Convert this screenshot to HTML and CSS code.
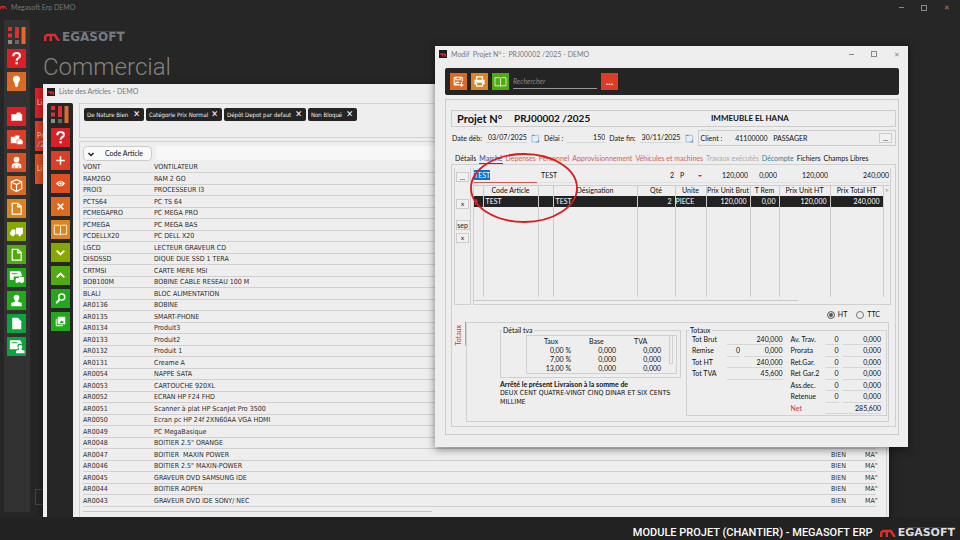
FILE: index.html
```html
<!DOCTYPE html>
<html lang="fr">
<head>
    <meta charset="UTF-8">
    <meta name="viewport" content="width=device-width, initial-scale=1.0">
    <title>Megasoft Erp DEMO</title>
    <link rel="stylesheet" href="styles.css">
</head>
<body>
    <!-- Shared icons -->
    <svg class="icon-defs" aria-hidden="true">
        <symbol id="bars" viewBox="0 0 20 20">
            <path fill="#d8322f" d="M1 1h4v4H1zM1 7.500h4v4H1zM8 1h4v11H8z"/>
            <path fill="#e06a2c" d="M14.500 1h4v17h-4z"/>
            <path fill="#8a8a8a" d="M1 14h4v4H1z"/>
            <path fill="#666" d="M8 14h4v4H8z"/>
        </symbol>
        <symbol id="help" viewBox="0 0 20 20">
            <path d="M6.600 7.500q0-3.300 3.500-3.300t3.500 2.800q0 1.600-1.800 2.700-1.700 1-1.700 2.600" fill="none" stroke="#fff" stroke-width="2.200"/>
            <path fill="#fff" d="M8.900 13.800h2.400v2.300H8.900z"/>
        </symbol>
        <symbol id="bulb" viewBox="0 0 20 20"><path fill="#fff" d="M10 4a3.700 3.700 0 0 1 3.700 3.700c0 2-1.700 3-2 4.800v2.300L10 16l-1.700-1.200v-2.300c-.3-1.800-2-2.800-2-4.800A3.700 3.700 0 0 1 10 4z"/></symbol>
        <symbol id="folder" viewBox="0 0 20 20"><path fill="#fff" d="M4.500 7.500h5l1-1.700h3.500l1 1.700h1v7H4.500z"/></symbol>
        <symbol id="folder-file" viewBox="0 0 20 20"><path fill="#fff" d="M4 7h4l.8-1.200H13V9.500h1.500l2 2v3.500H10v-1H4z"/><path d="M10.500 15v-4.500h3" stroke="#dc3d27" stroke-width=".6" fill="none"/></symbol>
        <symbol id="user" viewBox="0 0 20 20"><circle cx="10" cy="7" r="3" fill="#fff"/><path fill="#fff" d="M5 16v-2.500q0-3 5-3t5 3V16z"/><path d="M7.500 13v3M12.500 13v3" stroke="#dd5022" stroke-width=".8"/></symbol>
        <symbol id="box" viewBox="0 0 20 20"><path fill="none" stroke="#fff" stroke-width="1.200" d="M10 3.800l5.500 2.500v7L10 16.300l-5.500-3v-7zM4.500 6.300L10 9l5.500-2.700M10 9v7.300"/></symbol>
        <symbol id="page" viewBox="0 0 20 20"><path fill="none" stroke="#fff" stroke-width="1.300" d="M5.500 4.500h6l3.500 3.500v8H5.500zM11.300 4.500v3.800H15"/></symbol>
        <symbol id="page-full" viewBox="0 0 20 20"><path fill="#fff" d="M5.500 4h6l3.500 3.700V16H5.500z"/></symbol>
        <symbol id="truck" viewBox="0 0 20 20"><path fill="#fff" d="M9.500 6h7.200v7H9.500zM8.800 8v5.500H3.300V11l2-3z"/><circle cx="6" cy="13.500" r="1.600" fill="#fff"/><circle cx="13.500" cy="13.500" r="1.600" fill="#fff"/></symbol>
        <symbol id="card-truck" viewBox="0 0 20 20"><path fill="#fff" d="M3 3.500h11l1.500 3V9H7v3.500H3zM9.500 10.500h3v-1h5.500v5.500h-1l-1.500 1-1.500-1h-2l-1.500 1-1.500-1v-2z"/><path d="M5 6h6" stroke="#24a812" stroke-width="1"/></symbol>
        <symbol id="stamp" viewBox="0 0 20 20"><path fill="#fff" d="M10 4a3 3 0 0 1 3 3c0 1.800-1.500 2.500-1.500 4l4 1.500V16h-11v-3.500l4-1.500c0-1.500-1.500-2.200-1.500-4a3 3 0 0 1 3-3z"/></symbol>
        <symbol id="card-stamp" viewBox="0 0 20 20"><path fill="#fff" d="M3 3.500h11l1.500 3V8a2.500 2.500 0 0 0-4 3.500V13H3zM14 8.500a2 2 0 0 1 1.200 3.700l.3 1.300 3 1V17H9.500v-2.500l3-1 .3-1.300A2 2 0 0 1 14 8.500z"/><path d="M5 6h6" stroke="#0e9c38" stroke-width="1"/></symbol>
        <symbol id="plus" viewBox="0 0 20 20"><path d="M10 5.500v9M5.500 10h9" stroke="#fff" stroke-width="1.600"/></symbol>
        <symbol id="eye" viewBox="0 0 20 20"><path fill="#fff" d="M5 10q5-6 10 0-5 6-10 0z"/><circle cx="10" cy="10" r="1.700" fill="#fff" stroke="#dd5022" stroke-width="1"/></symbol>
        <symbol id="cross" viewBox="0 0 20 20"><path d="M7 7l6 6M13 7l-6 6" stroke="#fff" stroke-width="1.800"/></symbol>
        <symbol id="book" viewBox="0 0 20 20"><path fill="none" stroke="#fff" stroke-width="1" stroke-opacity=".9" d="M3.500 5.500H9l1 .8 1-.8h5.500V15H11l-1 .7-1-.7H3.500zM10 6v9.500"/></symbol>
        <symbol id="down" viewBox="0 0 20 20"><path fill="none" stroke="#fff" stroke-width="2" d="M6 8l4 4 4-4"/></symbol>
        <symbol id="up" viewBox="0 0 20 20"><path fill="none" stroke="#fff" stroke-width="2" d="M6 12l4-4 4 4"/></symbol>
        <symbol id="search" viewBox="0 0 20 20"><circle cx="11.300" cy="8.500" r="3.200" fill="none" stroke="#fff" stroke-width="1.500"/><path d="M9 11l-3.500 4" stroke="#fff" stroke-width="2"/></symbol>
        <symbol id="copies" viewBox="0 0 20 20"><path fill="none" stroke="#fff" d="M5.500 7.500v7h7"/><path fill="#fff" d="M7 5h8v8H7z"/><path fill="#22a818" d="M9 11.500l2-2.500 1 1 1-1v2.500z"/></symbol>
        <symbol id="save" viewBox="0 0 20 20"><path fill="none" stroke="#fff" stroke-width="1.300" d="M5 5h8.500l1 1v4M5 5v9h6M7 5v3h5V5M7 14v-3h4M13.500 10.500v5M11.500 13.500l2 2 2-2"/></symbol>
        <symbol id="print" viewBox="0 0 20 20"><path fill="none" stroke="#fff" stroke-width="1.400" d="M6.500 8V4.500h7V8"/><path fill="#fff" d="M4 8h12v5.500h-2v-2H6v2H4z"/><path fill="none" stroke="#fff" stroke-width="1.400" d="M6.500 12v3.500h7V12"/></symbol>
        <symbol id="brand" viewBox="0 0 20 10"><path fill="none" stroke="#dc2f2b" stroke-width="3" d="M1.500 10V4.500L4 2.500h9.500L18.500 10M8.500 3v7"/></symbol>
        <symbol id="app" viewBox="0 0 10 10"><path fill="#1b1b1b" d="M0 0h10v10H0z"/><path fill="#cc2b2b" d="M1 4h5l3 1v3l-2 1V6.500H5.500V8h-2V6H1z"/></symbol>
        <symbol id="calendar" viewBox="0 0 10 10"><path fill="#e4eef6" stroke="#9fc0d8" d="M1 1.500h7.500v7L6 9H1z"/><path d="M1 1.500h3M8.500 7v2H6" stroke="#4f8fbd" fill="none"/></symbol>
    </svg>

    <header class="app-title">
        <svg class="app-mark"><use href="#brand"/></svg>
        <span>Megasoft Erp DEMO</span>
        <span class="window-controls"><i class="minimize"></i><i class="restore"></i><i class="close">✕</i></span>
    </header>

    <nav class="sidebar main-sidebar" aria-label="Modules">
        <svg class="bars"><use href="#bars"/></svg>
        <button class="red" aria-label="Aide"><svg><use href="#help"/></svg></button>
        <button class="orange" aria-label="Astuces"><svg><use href="#bulb"/></svg></button>
        <button class="red group-start" aria-label="Dossiers"><svg><use href="#folder"/></svg></button>
        <button class="vermilion" aria-label="Documents"><svg><use href="#folder-file"/></svg></button>
        <button class="tomato" aria-label="Clients"><svg><use href="#user"/></svg></button>
        <button class="orange" aria-label="Articles"><svg><use href="#box"/></svg></button>
        <button class="amber" aria-label="Devis"><svg><use href="#page"/></svg></button>
        <button class="olive" aria-label="Livraisons"><svg><use href="#truck"/></svg></button>
        <button class="lime" aria-label="Factures"><svg><use href="#page"/></svg></button>
        <button class="green" aria-label="Achats"><svg><use href="#card-truck"/></svg></button>
        <button class="green" aria-label="Fournisseurs"><svg><use href="#stamp"/></svg></button>
        <button class="emerald" aria-label="Avoirs"><svg><use href="#page-full"/></svg></button>
        <button class="emerald" aria-label="Paiements"><svg><use href="#card-stamp"/></svg></button>
    </nav>

    <main class="home">
        <div class="brand">
            <svg class="brand-mark"><use href="#brand"/></svg>
            <span class="brand-name">EGASOFT</span>
        </div>
        <h1>Commercial</h1>
        <div class="tiles">
            <div class="tile red">Li</div>
            <div class="tile vermilion">Pr<br>/2</div>
            <div class="tile tomato">Li</div>
        </div>
        <button class="exit" aria-label="Quitter"></button>
    </main>

    <!-- Articles window -->
    <section class="window articles">
        <div class="window-title"><svg class="app-icon"><use href="#app"/></svg><span>Liste des Articles - DEMO</span></div>
        <div class="articles-body">
            <nav class="sidebar articles-sidebar" aria-label="Actions">
                <svg class="bars"><use href="#bars"/></svg>
                <button class="red" aria-label="Aide"><svg><use href="#help"/></svg></button>
                <button class="vermilion" aria-label="Ajouter"><svg><use href="#plus"/></svg></button>
                <button class="tomato" aria-label="Voir"><svg><use href="#eye"/></svg></button>
                <button class="orange" aria-label="Supprimer"><svg><use href="#cross"/></svg></button>
                <button class="amber" aria-label="Catalogue"><svg><use href="#book"/></svg></button>
                <button class="olive" aria-label="Suivant"><svg><use href="#down"/></svg></button>
                <button class="lime" aria-label="Précédent"><svg><use href="#up"/></svg></button>
                <button class="green" aria-label="Rechercher"><svg><use href="#search"/></svg></button>
                <button class="green" aria-label="Dupliquer"><svg><use href="#copies"/></svg></button>
            </nav>
            <div class="articles-content">
                <div class="filters">
                    <button class="chip chip-small">De Nature Bien <b>✕</b></button>
                    <button class="chip chip-medium">Catégorie Prix Normal <b>✕</b></button>
                    <button class="chip chip-large">Dépôt Depot par defaut <b>✕</b></button>
                    <button class="chip chip-tiny">Non Bloqué <b>✕</b></button>
                </div>
                <div class="article-list">
                    <div class="search-row">
                        <button class="field-select"><svg viewBox="0 0 8 8"><path d="M1.500 3L4 5.500 6.500 3" fill="none" stroke="#222" stroke-width="1.500"/></svg><span>Code Article</span></button>
                        <input type="text" aria-label="Recherche par code article">
                    </div>
                    <table class="article-table">
                        <colgroup><col class="col-code"><col><col class="col-type"><col class="col-family"></colgroup>
                        <tbody>
                            <tr><td>VONT</td><td>VONTILATEUR</td><td></td><td></td></tr>
                            <tr><td>RAM2GO</td><td>RAM 2 GO</td><td></td><td></td></tr>
                            <tr><td>PROI3</td><td>PROCESSEUR I3</td><td></td><td></td></tr>
                            <tr><td>PCTS64</td><td>PC TS 64</td><td></td><td></td></tr>
                            <tr><td>PCMEGAPRO</td><td>PC MEGA PRO</td><td></td><td></td></tr>
                            <tr><td>PCMEGA</td><td>PC MEGA BAS</td><td></td><td></td></tr>
                            <tr><td>PCDELLX20</td><td>PC DELL X20</td><td></td><td></td></tr>
                            <tr><td>LGCD</td><td>LECTEUR GRAVEUR CD</td><td></td><td></td></tr>
                            <tr><td>DISDSSD</td><td>DIQUE DUE SSD 1 TERA</td><td></td><td></td></tr>
                            <tr><td>CRTMSI</td><td>CARTE MERE MSI</td><td></td><td></td></tr>
                            <tr><td>BOB100M</td><td>BOBINE CABLE RESEAU 100 M</td><td></td><td></td></tr>
                            <tr><td>BLALI</td><td>BLOC ALIMENTATION</td><td></td><td></td></tr>
                            <tr><td>AR0136</td><td>BOBINE</td><td></td><td></td></tr>
                            <tr><td>AR0135</td><td>SMART-PHONE</td><td></td><td></td></tr>
                            <tr><td>AR0134</td><td>Produit3</td><td></td><td></td></tr>
                            <tr><td>AR0133</td><td>Produit2</td><td></td><td></td></tr>
                            <tr><td>AR0132</td><td>Produit 1</td><td></td><td></td></tr>
                            <tr><td>AR0131</td><td>Creame A</td><td></td><td></td></tr>
                            <tr><td>AR0054</td><td>NAPPE SATA</td><td></td><td></td></tr>
                            <tr><td>AR0053</td><td>CARTOUCHE 920XL</td><td></td><td></td></tr>
                            <tr><td>AR0052</td><td>ECRAN HP F24 FHD</td><td></td><td></td></tr>
                            <tr><td>AR0051</td><td>Scanner à plat HP ScanJet Pro 3500</td><td></td><td></td></tr>
                            <tr><td>AR0050</td><td>Ecran pc HP 24f 2XN60AA VGA HDMI</td><td></td><td></td></tr>
                            <tr><td>AR0049</td><td>PC MegaBasique</td><td></td><td></td></tr>
                            <tr><td>AR0048</td><td>BOITIER 2.5" ORANGE</td><td></td><td></td></tr>
                            <tr><td>AR0047</td><td>BOITIER &nbsp;MAXIN POWER</td><td>BIEN</td><td>MA"</td></tr>
                            <tr><td>AR0046</td><td>BOITIER 2.5" MAXIN-POWER</td><td>BIEN</td><td>MA"</td></tr>
                            <tr><td>AR0045</td><td>GRAVEUR DVD SAMSUNG IDE</td><td>BIEN</td><td>MA"</td></tr>
                            <tr><td>AR0044</td><td>BOITIER AOPEN</td><td>BIEN</td><td>MA"</td></tr>
                            <tr><td>AR0043</td><td>GRAVEUR DVD IDE SONY/ NEC</td><td>BIEN</td><td>MA"</td></tr>
                        </tbody>
                    </table>
                    <div class="scroll-track"></div>
                </div>
            </div>
        </div>
    </section>

    <!-- Project window -->
    <section class="window project">
        <div class="window-title">
            <svg class="app-icon"><use href="#app"/></svg><span>Modif &nbsp;Projet N° : &nbsp;PRJ00002 /2025 - DEMO</span>
            <span class="window-controls"><i class="minimize"></i><i class="maximize"></i><i class="close">✕</i></span>
        </div>
        <div class="toolbar">
            <button class="orange" aria-label="Enregistrer"><svg><use href="#save"/></svg></button>
            <button class="amber" aria-label="Imprimer"><svg><use href="#print"/></svg></button>
            <button class="lime" aria-label="Consulter"><svg><use href="#book"/></svg></button>
            <input type="text" placeholder="Rechercher" aria-label="Rechercher">
            <button class="vermilion more">...</button>
        </div>
        <div class="project-body">
            <div class="project-head">
                <span class="project-label">Projet N°</span>
                <span class="project-number">PRJ00002 /2025</span>
                <span class="project-name">IMMEUBLE EL HANA</span>
            </div>
            <div class="project-info">
                <label for="date_deb">Date déb:</label>
                <input type="text" id="date_deb" class="date" value="03/07/2025">
                <svg class="calendar"><use href="#calendar"/></svg>
                <label for="delai">Délai :</label>
                <input type="text" id="delai" class="delay number" value="150">
                <label for="date_fin">Date fin:</label>
                <input type="text" id="date_fin" class="date" value="30/11/2025">
                <svg class="calendar"><use href="#calendar"/></svg>
                <div class="client">
                    <label for="client">Client :</label>
                    <input type="text" id="client" value="41100000">
                    <span>PASSAGER</span>
                    <button class="small-button">...</button>
                </div>
            </div>
            <nav class="tabs">
                <a href="#">Détails</a>
                <a href="#" class="active">Marché</a>
                <a href="#" class="tab-red">Dépenses</a>
                <a href="#" class="tab-red">Personnel</a>
                <a href="#" class="tab-red">Approvisionnement</a>
                <a href="#" class="tab-red">Véhicules et machines</a>
                <a href="#" class="tab-gray">Travaux exécutés</a>
                <a href="#" class="tab-teal">Décompte</a>
                <a href="#">Fichiers</a>
                <a href="#">Champs Libres</a>
            </nav>
            <div class="tab-panel">
                <div class="market">
                    <div class="line-actions">
                        <button class="small-button">...</button>
                        <button class="small-button remove">×</button>
                        <button class="small-button sep">sep</button>
                        <button class="small-button">×</button>
                    </div>
                    <div class="lines">
                        <div class="line-entry">
                            <div class="entry-code"><mark>TEST</mark></div>
                            <input type="text" class="entry-name" aria-label="Désignation" value="TEST">
                            <input type="text" class="entry-qty number" aria-label="Quantité" value="2">
                            <div class="entry-unit"><span>P</span><i></i></div>
                            <input type="text" class="entry-price number" aria-label="Prix brut" value="120,000">
                            <input type="text" class="entry-discount number" aria-label="Remise" value="0,000">
                            <input type="text" class="entry-net number" aria-label="Prix HT" value="120,000">
                            <input type="text" class="entry-total number" aria-label="Total HT" value="240,000">
                        </div>
                        <table class="line-table">
                            <colgroup><col class="w-mark"><col class="w-code"><col class="w-icon"><col class="w-name"><col class="w-qty"><col class="w-unit"><col class="w-price"><col class="w-discount"><col class="w-net"><col class="w-total"><col class="w-scroll"></colgroup>
                            <thead>
                                <tr><th></th><th>Code Article</th><th></th><th>Désignation</th><th>Qté</th><th>Unite</th><th>Prix Unit Brut</th><th>T Rem</th><th>Prix Unit HT</th><th>Prix Total HT</th><th class="chevron">&gt;</th></tr>
                            </thead>
                            <tbody>
                                <tr class="selected"><td class="mark">▮</td><td>TEST</td><td></td><td>TEST</td><td class="number">2</td><td class="unit">PIECE</td><td class="number">120,000</td><td class="number">0,00</td><td class="number">120,000</td><td class="number">240,000</td><td></td></tr>
                                <tr class="empty"><td></td><td></td><td></td><td></td><td></td><td></td><td></td><td></td><td></td><td></td><td></td></tr>
                            </tbody>
                        </table>
                        <div class="line-scroll"></div>
                    </div>
                </div>
                <div class="price-mode">
                    <label><input type="radio" name="mode" checked> HT</label>
                    <label><input type="radio" name="mode"> TTC</label>
                </div>
                <div class="totals">
                    <div class="totals-tab">Totaux</div>
                    <div class="totals-panel">
                        <div class="tax-side">
                            <fieldset class="tax">
                                <legend>Détail tva</legend>
                                <div class="tax-box">
                                    <table>
                                        <thead><tr><th>Taux</th><th>Base</th><th>TVA</th></tr></thead>
                                        <tbody>
                                            <tr><td>0,00 %</td><td>0,000</td><td>0,000</td></tr>
                                            <tr><td>7,00 %</td><td>0,000</td><td>0,000</td></tr>
                                            <tr><td>13,00 %</td><td>0,000</td><td>0,000</td></tr>
                                        </tbody>
                                    </table>
                                    <div class="tax-scroll"></div>
                                </div>
                            </fieldset>
                            <p class="amount"><b>Arrêté le présent Livraison à la somme de</b></p>
                            <p class="amount-words">DEUX CENT QUATRE-VINGT CINQ DINAR ET SIX CENTS MILLIME</p>
                        </div>
                        <fieldset class="sums">
                            <legend>Totaux</legend>
                            <div class="sum-columns">
                                <div class="sum-column">
                                    <div class="sum"><span>Tot Brut</span><output>240,000</output></div>
                                    <div class="sum"><span>Remise</span><output class="rate">0</output><output>0,000</output></div>
                                    <div class="sum"><span>Tot HT</span><output>240,000</output></div>
                                    <div class="sum"><span>Tot TVA</span><output>45,600</output></div>
                                </div>
                                <div class="sum-column">
                                    <div class="sum"><span>Av. Trav.</span><output class="rate">0</output><output>0,000</output></div>
                                    <div class="sum"><span>Prorata</span><output class="rate">0</output><output>0,000</output></div>
                                    <div class="sum"><span>Ret.Gar.</span><output class="rate">0</output><output>0,000</output></div>
                                    <div class="sum"><span>Ret Gar.2</span><output class="rate">0</output><output>0,000</output></div>
                                    <div class="sum"><span>Ass.dec.</span><output class="rate">0</output><output>0,000</output></div>
                                    <div class="sum"><span>Retenue</span><output class="rate">0</output><output>0,000</output></div>
                                    <div class="sum net"><span>Net</span><output>285,600</output></div>
                                </div>
                            </div>
                        </fieldset>
                    </div>
                </div>
            </div>
        </div>
        <svg class="highlight" viewBox="0 0 108 70" aria-hidden="true"><ellipse cx="54" cy="35" rx="53" ry="34" fill="none" stroke="#dc1c1c" stroke-width="1.800"/></svg>
    </section>

    <footer class="caption">
        <span>MODULE PROJET (CHANTIER) - MEGASOFT ERP</span>
        <div class="brand brand-light">
            <svg class="brand-mark"><use href="#brand"/></svg>
            <span class="brand-name">EGASOFT</span>
        </div>
    </footer>
</body>
</html>
```
FILE: styles.css
```css
/* General Styles */
* {
    box-sizing: border-box;
}

body {
    font-family: Lato, sans-serif;
    font-size: 7px;
    line-height: 9px;
    margin: 0;
    min-height: 100vh;
    background-color: #262626;
    color: #111;
    overflow: hidden;
}

button, input {
    font: inherit;
    color: inherit;
    margin: 0;
    padding: 0;
    border: none;
    border-radius: 0;
    background: none;
    min-width: 0;
}

button {
    cursor: pointer;
}

input {
    outline: none;
}

table {
    border-collapse: collapse;
    table-layout: fixed;
    width: 100%;
}

th, td {
    padding: 0;
    text-align: left;
    font-weight: normal;
    white-space: nowrap;
}

.icon-defs {
    display: none;
}

.number {
    text-align: right;
}

/* Colors of tiles and tool buttons */
.red { background-color: #dc1f26; }
.vermilion { background-color: #dc3d27; }
.tomato { background-color: #dd5022; }
.orange { background-color: #dc6a22; }
.amber { background-color: #dc8420; }
.olive { background-color: #84a800; }
.lime { background-color: #50aa10; }
.green { background-color: #22a818; }
.emerald { background-color: #0ca23c; }

/* Application title bar */
.app-title {
    display: flex;
    align-items: center;
    gap: 4px;
    height: 15px;
    color: #777;
}

.app-mark {
    width: 7px;
    height: 5px;
}

.window-controls {
    display: flex;
    align-items: center;
    gap: 17px;
    margin-left: auto;
    padding-right: 11px;
    color: #888;
}

.minimize {
    width: 5px;
    height: 1px;
    background-color: #888;
}

.restore, .maximize {
    width: 6px;
    height: 6px;
    border: 1px solid #888;
}

.close {
    font-style: normal;
    width: 5px;
}

/* Sidebars */
.sidebar {
    display: flex;
    flex-direction: column;
    align-items: center;
    gap: 4px;
    width: 26px;
}

.sidebar .bars {
    width: 20px;
    height: 20px;
    margin-bottom: -1px;
}

.sidebar button {
    width: 19px;
    height: 19px;
}

.sidebar button svg, .toolbar button svg {
    display: block;
    width: 100%;
    height: 100%;
}

.main-sidebar {
    position: absolute;
    top: 20px;
    bottom: 28px;
    left: 4px;
    padding: 6px 1px 0 0;
    background-color: #323232;
}

.main-sidebar .group-start {
    margin-top: 12px;
}

.articles-sidebar {
    padding: 2px 0 0;
    background-color: #262626;
    border-radius: 2px 2px 0 0;
}

/* Home page behind the windows */
.home {
    display: flex;
    flex-direction: column;
    height: calc(100vh - 50px);
    padding: 9px 0 0 35px;
}

.brand {
    display: flex;
    align-items: flex-end;
    gap: 2px;
    height: 17px;
    padding-left: 9px;
    color: #777b80;
}

.brand-mark {
    width: 16px;
    height: 8px;
}

.brand-name {
    font-family: "DejaVu Sans", sans-serif;
    font-size: 12px;
    font-weight: bold;
    line-height: 8px;
    padding-top: 2px;
    background: linear-gradient(to right, transparent 15%, #8c2f2c 15%, #8c2f2c 35%, #2c4a73 35%) no-repeat;
    background-size: 100% 1px;
}

h1 {
    margin: 10px 0 0 8px;
    font-family: Roboto, sans-serif;
    font-size: 24px;
    font-weight: 300;
    line-height: 32px;
    color: #85827c;
}

.tiles {
    display: grid;
    gap: 3px;
    width: 30px;
    padding-top: 5px;
}

.tile {
    height: 30px;
    padding: 10px 0 0 2px;
    color: #f4c8c0;
}

.exit {
    width: 14px;
    height: 16px;
    margin-top: auto;
    border: 1px solid #444;
}

/* Windows */
.window {
    position: absolute;
    background-color: #eee;
    box-shadow: 0 2px 8px rgba(0, 0, 0, 0.5);
}

.window-title {
    display: flex;
    align-items: center;
    gap: 4px;
    height: 15px;
    padding-left: 4px;
    color: #777;
}

.app-icon {
    width: 8px;
    height: 8px;
}

/* Articles window */
.articles {
    top: 84px;
    right: 71px;
    bottom: 23px;
    left: 43px;
    display: flex;
    flex-direction: column;
}

.articles-body {
    flex: 1;
    display: flex;
    gap: 6px;
    padding: 4px 2px 0 4px;
}

.articles-content {
    flex: 1;
    display: flex;
    flex-direction: column;
    gap: 3px;
}

.filters {
    display: flex;
    align-items: flex-start;
    gap: 2px;
    height: 35px;
    padding: 4px;
    border: 1px solid #d2d2d2;
}

.chip {
    display: flex;
    align-items: center;
    justify-content: space-between;
    height: 13px;
    padding: 0 4px 0 3px;
    border-radius: 2px;
    background-color: #242424;
    color: #eee;
    font-family: "DejaVu Sans Condensed", sans-serif;
    font-size: 6px;
    white-space: nowrap;
}

.chip b {
    font-size: 9px;
    color: #fff;
}

.chip-small { width: 60px; }
.chip-medium { width: 76px; }
.chip-large { width: 82px; }
.chip-tiny { width: 49px; }

.article-list {
    flex: 1;
    padding: 4px 10px 0 3px;
    border: 1px solid #d2d2d2;
    border-bottom: none;
}

.search-row {
    display: flex;
    gap: 4px;
    height: 15px;
    margin-bottom: 1px;
}

.search-row input {
    flex: 1;
    height: 14px;
    background-color: #f7f7f7;
}

.field-select {
    display: flex;
    align-items: center;
    gap: 10px;
    width: 69px;
    padding-left: 3px;
    border: 1px solid #ccc;
    border-radius: 4px;
    background-color: #f9f9f9;
}

.field-select svg {
    width: 8px;
    height: 8px;
}

.article-table {
    height: 345px;
    color: #2c2c2c;
    font-family: "DejaVu Sans Condensed", sans-serif;
}

.article-table td {
    padding-top: 1px;
    border-bottom: 1px solid #cfcfcf;
}

.col-code { width: 71px; }
.col-type { width: 34px; }
.col-family { width: 11px; }

.scroll-track {
    width: 44%;
    height: 1px;
    margin-top: 4px;
    background-color: #c4c4c4;
}

/* Project window */
.project {
    top: 46px;
    right: 52px;
    left: 435px;
    padding: 0 9px 12px 10px;
}

.project .window-title {
    height: 16px;
    margin: 0 -9px 0 -10px;
}

.project .window-controls {
    padding-right: 9px;
}

.toolbar {
    display: flex;
    align-items: center;
    gap: 4px;
    height: 27px;
    margin-top: 6px;
    padding: 0 5px;
    border-radius: 2px;
    background-color: #242424;
    color: #fff;
}

.toolbar button {
    width: 17px;
    height: 17px;
}

.toolbar input {
    width: 84px;
    height: 15px;
    border-bottom: 1px solid #999;
    font-style: italic;
}

.toolbar input::placeholder {
    color: #888;
}

.toolbar .more {
    font-size: 10px;
    font-weight: bold;
}

.project-body {
    margin-top: 4px;
    padding: 10px 2px 7px 5px;
    border: 1px solid #ccc;
}

.project-head {
    display: flex;
    align-items: center;
    height: 17px;
    padding-left: 5px;
    border: 1px solid #ccc;
    font-weight: bold;
}

.project-label {
    width: 57px;
    font-size: 11px;
}

.project-number {
    width: 197px;
    font-size: 10px;
}

.project-name {
    font-size: 8px;
}

.project-info {
    display: flex;
    align-items: center;
    gap: 4px;
    margin-top: 3px;
    padding-left: 1px;
}

.project-info input {
    border-bottom: 1px solid #d6d6d6;
}

.project-info .date {
    width: 41px;
    padding-left: 2px;
}

.project-info label {
    white-space: nowrap;
}

.delay {
    width: 38px;
}

.calendar {
    width: 9px;
    height: 9px;
}

.client {
    flex: 1;
    display: flex;
    align-items: center;
    gap: 5px;
    height: 16px;
    padding: 0 3px 0 2px;
    border: 1px solid #ccc;
}

.project-info .client input {
    width: 33px;
    margin-left: 8px;
    border: none;
}

.small-button {
    width: 13px;
    height: 10px;
    border: 1px solid #ccc;
    line-height: 8px;
    background-color: #f1f1f1;
}

.client .small-button {
    margin-left: auto;
}

/* Tabs */
.tabs {
    display: flex;
    gap: 3px;
    margin-top: 8px;
    padding-left: 4px;
}

.tabs a {
    color: #111;
    text-decoration: none;
    white-space: nowrap;
}

.tabs .active {
    color: #3a48a8;
    border-bottom: 1px solid #3a48a8;
}

.tabs .tab-red { color: #d4605c; }
.tabs .tab-gray { color: #aaa; }
.tabs .tab-teal { color: #1b87a5; }

.tab-panel {
    padding: 3px 4px 4px 2px;
    border: 1px solid #d0d0d0;
}

.market {
    display: flex;
    gap: 2px;
}

.line-actions {
    display: flex;
    flex-direction: column;
    align-items: center;
    width: 17px;
    padding-top: 4px;
    border: 1px solid #d0d0d0;
    border-top: none;
    gap: 3px;
}

.line-actions .remove {
    margin: 14px 0 8px;
}

.line-actions .sep {
    width: 14px;
}

.lines {
    flex: 1;
    min-width: 0;
    height: 137px;
    border: 1px solid #d0d0d0;
    border-top: none;
}

.line-entry {
    display: flex;
    height: 17px;
    padding: 1px 1px 2px 0;
}

.line-entry input, .entry-unit {
    border-bottom: 1px solid #e0e0e0;
}

.entry-code {
    width: 63px;
    padding-top: 2px;
    border-bottom: 1px solid #d9534f;
}

.entry-code mark {
    padding: 1px 0;
    background-color: #0a74d0;
    color: #fff;
}

.entry-name {
    flex: 1;
    padding-left: 4px;
}

.entry-qty { width: 50px; }
.entry-price { width: 44px; }
.entry-discount { width: 29px; }
.entry-net { width: 51px; }
.entry-total { width: 61px; }

.entry-unit {
    display: flex;
    align-items: center;
    justify-content: space-between;
    width: 30px;
    padding: 0 2px 0 6px;
}

.entry-unit i {
    border: 2px solid transparent;
    border-top-color: #d22;
    border-bottom: none;
}

.line-table th {
    height: 10px;
    border: 1px solid #ccc;
    border-width: 1px 1px 0 0;
    text-align: center;
}

.line-table td {
    height: 11px;
    padding: 0 3px 0 2px;
    border-right: 1px solid #ccc;
}

.line-table td:last-child {
    border: none;
    background-color: #eee;
}

.line-table .chevron {
    color: #888;
    border-right: none;
}

.selected {
    background-color: #222;
    color: #fff;
}

.line-table .mark {
    padding: 0;
    color: #c33;
}

.line-table .unit {
    padding: 0;
}

.line-table .empty td {
    height: 90px;
}

.w-mark { width: 9px; }
.w-code { width: 55px; }
.w-icon { width: 15px; }
.w-qty { width: 38px; }
.w-unit { width: 31px; }
.w-price { width: 44px; }
.w-discount { width: 29px; }
.w-net { width: 51px; }
.w-total { width: 53px; }
.w-scroll { width: 7px; }

.line-scroll {
    width: 78%;
    height: 1px;
    margin-top: 3px;
    background-color: #c8c8c8;
}

/* Price mode */
.price-mode {
    display: flex;
    justify-content: flex-end;
    gap: 9px;
    padding: 5px 11px 3px 0;
}

.price-mode label {
    display: flex;
    align-items: center;
    gap: 3px;
}

.price-mode input {
    appearance: none;
    width: 8px;
    height: 8px;
    border: 1px solid #777;
    border-radius: 50%;
}

.price-mode input:checked {
    background-color: #555;
    box-shadow: inset 0 0 0 1px #eee;
}

/* Totals */
.totals {
    display: flex;
    padding-right: 2px;
}

.totals-tab {
    writing-mode: vertical-rl;
    transform: rotate(180deg);
    align-self: flex-start;
    width: 12px;
    padding-bottom: 3px;
    text-align: left;
    color: #c8343c;
    border-left: 1px solid #aaa;
}

.totals-panel {
    flex: 1;
    display: flex;
    gap: 5px;
    padding: 3px 1px 5px 33px;
    border: 1px solid #d0d0d0;
}

.tax-side {
    flex: 1;
}

fieldset {
    margin: 0;
    padding: 0;
    min-width: 0;
    border: 1px solid #d0d0d0;
}

legend {
    margin-left: -3px;
    padding: 0 1px;
}

.tax {
    padding: 0 3px 3px 25px;
}

.tax legend {
    margin-left: -24px;
}

.tax-box {
    display: flex;
    gap: 7px;
    padding-right: 3px;
    border: 1px solid #d0d0d0;
}

.tax-box th {
    height: 10px;
    padding-left: 17px;
}

.tax-box td {
    height: 9px;
    padding-right: 1px;
    text-align: right;
}

.tax-scroll {
    width: 4px;
    height: 28px;
    border: 1px solid #d0d0d0;
    border-top: none;
}

.amount {
    margin: 2px 0 0;
}

.amount-words {
    margin: 0;
    font-family: "DejaVu Sans Condensed", sans-serif;
}

.sums {
    width: 201px;
    padding: 0 5px;
}

.sum-columns {
    display: flex;
    gap: 8px;
    height: 80px;
}

.sum-column {
    flex: 1;
    display: grid;
    grid-template-rows: repeat(7, 1fr);
}

.sum {
    display: flex;
    gap: 4px;
    margin-bottom: 1px;
}

.sum span {
    width: 31px;
    white-space: nowrap;
}

.sum output {
    flex: 1;
    border-bottom: 1px solid #d6d6d6;
    text-align: right;
}

.sum .rate {
    flex: none;
    width: 13px;
}

.net span {
    color: #d2343c;
}

/* Ring over the selected line */
.highlight {
    position: absolute;
    top: 107px;
    left: 35px;
    width: 108px;
    height: 70px;
}

/* Caption bar */
.caption {
    position: absolute;
    right: 0;
    bottom: 0;
    left: 0;
    display: flex;
    align-items: center;
    justify-content: flex-end;
    height: 23px;
    padding: 7px 5px 0 0;
    background-color: #222;
    color: #fff;
    font-family: Roboto, sans-serif;
    font-size: 11px;
    font-weight: 500;
}

.brand-light {
    height: 10px;
    padding-left: 7px;
    color: #ddd;
}

.brand-light .brand-name {
    font-size: 11px;
}
```
